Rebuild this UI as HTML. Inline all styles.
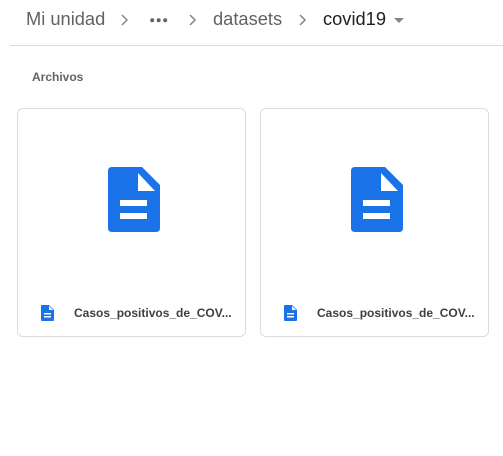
<!DOCTYPE html>
<html><head><style>
body{margin:0;width:503px;height:456px;background:#fff;font-family:"Liberation Sans",Arial,sans-serif;position:relative;overflow:hidden}
.bc{position:absolute;top:8px;font-size:18.3px;color:#5f6368;white-space:nowrap}
.sep{position:absolute;top:12px}
.hr{position:absolute;left:10px;right:0;top:45px;height:1px;background:#dadce0}
.arch{position:absolute;left:32px;top:70px;font-size:12px;font-weight:bold;color:#5f6368}
.card{position:absolute;top:108px;width:229px;height:229px;border:1px solid #dadce0;border-radius:6px;box-sizing:border-box}
.name{position:absolute;left:56px;top:197px;font-size:12px;font-weight:bold;color:#3c4043}
</style></head><body>
<div class="bc" style="left:26px">Mi unidad</div>
<svg class="sep" style="left:119px" width="10" height="16" viewBox="0 0 10 16"><path d="M3 3l5 5-5 5" stroke="#80868b" stroke-width="1.5" fill="none"/></svg>
<svg style="position:absolute;left:150px;top:18px" width="18" height="5"><circle cx="2.2" cy="2.2" r="2" fill="#5f6368"/><circle cx="8.7" cy="2.2" r="2" fill="#5f6368"/><circle cx="15.2" cy="2.2" r="2" fill="#5f6368"/></svg>
<svg class="sep" style="left:187px" width="10" height="16" viewBox="0 0 10 16"><path d="M3 3l5 5-5 5" stroke="#80868b" stroke-width="1.5" fill="none"/></svg>
<div class="bc" style="left:213px">datasets</div>
<svg class="sep" style="left:297px" width="10" height="16" viewBox="0 0 10 16"><path d="M3 3l5 5-5 5" stroke="#80868b" stroke-width="1.5" fill="none"/></svg>
<div class="bc" style="left:323px;color:#202124">covid19</div>
<svg style="position:absolute;left:394px;top:18px" width="10" height="6"><path d="M0 0h10L5 5z" fill="#80868b"/></svg>
<div class="hr"></div>
<div class="arch">Archivos</div>

<div class="card" style="left:17px">
<svg style="position:absolute;left:90px;top:58px" width="52" height="65" viewBox="0 0 52 65"><path d="M4 0H34L52 18V61Q52 65 48 65H4Q0 65 0 61V4Q0 0 4 0Z" fill="#1a73e8"/><path d="M30 6V24H47Z" fill="#fff"/><rect x="12" y="33" width="27" height="6" fill="#fff"/><rect x="12" y="46" width="27" height="6" fill="#fff"/></svg>
<svg style="position:absolute;left:23px;top:196px" width="13" height="16" viewBox="0 0 13 16"><path d="M1 0H8L13 5V15Q13 16 12 16H1Q0 16 0 15V1Q0 0 1 0Z" fill="#1a73e8"/><path d="M8 1V5H12Z" fill="#fff"/><rect x="3" y="8" width="7" height="1.5" fill="#fff"/><rect x="3" y="11" width="7" height="1.5" fill="#fff"/></svg>
<div class="name">Casos_positivos_de_COV...</div>
</div>
<div class="card" style="left:260px">
<svg style="position:absolute;left:90px;top:58px" width="52" height="65" viewBox="0 0 52 65"><path d="M4 0H34L52 18V61Q52 65 48 65H4Q0 65 0 61V4Q0 0 4 0Z" fill="#1a73e8"/><path d="M30 6V24H47Z" fill="#fff"/><rect x="12" y="33" width="27" height="6" fill="#fff"/><rect x="12" y="46" width="27" height="6" fill="#fff"/></svg>
<svg style="position:absolute;left:23px;top:196px" width="13" height="16" viewBox="0 0 13 16"><path d="M1 0H8L13 5V15Q13 16 12 16H1Q0 16 0 15V1Q0 0 1 0Z" fill="#1a73e8"/><path d="M8 1V5H12Z" fill="#fff"/><rect x="3" y="8" width="7" height="1.5" fill="#fff"/><rect x="3" y="11" width="7" height="1.5" fill="#fff"/></svg>
<div class="name">Casos_positivos_de_COV...</div>
</div>
</body></html>
